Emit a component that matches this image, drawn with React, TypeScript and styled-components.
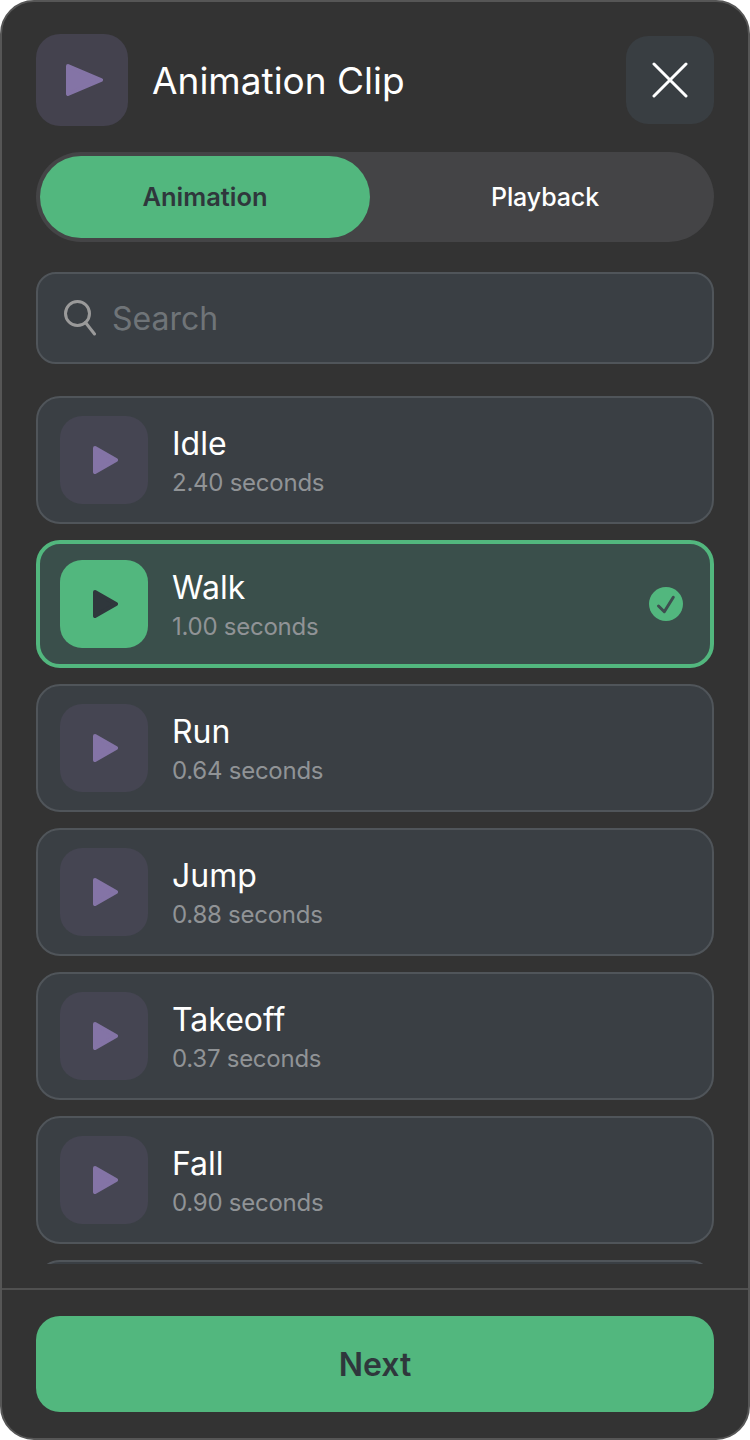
import React from "react";
import styled, { createGlobalStyle } from "styled-components";

const Global = createGlobalStyle`
  html, body { margin: 0; padding: 0; background: #ffffff; }
  * { box-sizing: border-box; }
`;

const Panel = styled.div`
  width: 750px;
  height: 1440px;
  display: flex;
  flex-direction: column;
  background: #333333;
  border: 2px solid #565656;
  border-radius: 34px;
  overflow: hidden;
  font-family: Inter, "Liberation Sans", sans-serif;
  color: #ffffff;
`;

const Header = styled.header`
  display: flex;
  align-items: center;
  padding: 32px 34px 0;
`;

const HeaderIcon = styled.div`
  width: 92px;
  height: 92px;
  border-radius: 24px;
  background: #44424e;
  display: flex;
  align-items: center;
  justify-content: center;
`;

const Title = styled.h1`
  flex: 1;
  margin: 0 0 0 24px;
  padding-top: 2px;
  font-size: 37px;
  line-height: 44px;
  font-weight: 400;
`;

const CloseButton = styled.div`
  width: 88px;
  height: 88px;
  border-radius: 22px;
  background: #393e42;
  display: flex;
  align-items: center;
  justify-content: center;
`;

const Segments = styled.div`
  display: flex;
  gap: 10px;
  height: 90px;
  margin: 26px 34px 0;
  padding: 4px;
  border-radius: 45px;
  background: #444446;
`;

const Segment = styled.div<{ $active?: boolean }>`
  flex: 1;
  display: flex;
  align-items: center;
  justify-content: center;
  padding-bottom: ${(p) => (p.$active ? "2px" : "0")};
  border-radius: 41px;
  font-size: ${(p) => (p.$active ? "25.5px" : "25px")};
  font-weight: ${(p) => (p.$active ? 600 : 500)};
  letter-spacing: ${(p) => (p.$active ? "0" : "-0.1px")};
  background: ${(p) => (p.$active ? "#52b77e" : "transparent")};
  color: ${(p) => (p.$active ? "#2f373c" : "#ffffff")};
`;

const Search = styled.div`
  display: flex;
  align-items: center;
  gap: 16px;
  height: 92px;
  margin: 30px 34px 0;
  padding: 0 26px;
  border: 2px solid #50555a;
  border-radius: 20px;
  background: #3a3f44;
`;

const Placeholder = styled.span`
  font-size: 32px;
  color: #6f7478;
`;

const List = styled.div`
  flex: 1;
  min-height: 0;
  display: flex;
  flex-direction: column;
  gap: 16px;
  margin: 32px 34px 0;
  overflow: hidden;
`;

const Row = styled.div<{ $selected?: boolean }>`
  flex: none;
  display: flex;
  align-items: center;
  height: 128px;
  padding: 0 27px 0 ${(p) => (p.$selected ? "20px" : "22px")};
  border: ${(p) => (p.$selected ? "4px solid #52b77e" : "2px solid #50555a")};
  border-radius: 24px;
  background: ${(p) => (p.$selected ? "#3a4f4b" : "#3a3f44")};
`;

const RowIcon = styled.div<{ $selected?: boolean }>`
  flex: none;
  width: 88px;
  height: 88px;
  border-radius: 22px;
  background: ${(p) => (p.$selected ? "#52b77e" : "#454552")};
  display: flex;
  align-items: center;
  justify-content: center;
`;

const RowText = styled.div`
  flex: 1;
  margin-left: 24px;
  display: flex;
  flex-direction: column;
`;

const RowName = styled.div`
  margin-top: 1px;
  font-size: 32px;
  line-height: 40px;
  font-weight: 400;
`;

const RowSub = styled.div`
  margin-top: 4px;
  font-size: 24px;
  line-height: 30px;
  letter-spacing: -0.25px;
  color: #909396;
`;

const Footer = styled.footer`
  margin-top: 24px;
  padding: 26px 34px;
  border-top: 2px solid #505050;
`;

const NextButton = styled.div`
  height: 96px;
  border-radius: 24px;
  background: #52b77e;
  color: #2f373c;
  display: flex;
  align-items: center;
  justify-content: center;
  font-size: 32px;
  font-weight: 600;
`;

const PlaySvg = styled.svg<{ $shift: number }>`
  display: block;
  margin-left: ${(p) => p.$shift}px;
`;

const Play = ({ w, h, color, shift }: { w: number; h: number; color: string; shift: number }) => (
  <PlaySvg $shift={shift} width={w} height={h} viewBox={`0 0 ${w} ${h}`}>
    <path
      d={`M2 2 L${w - 2} ${h / 2} L2 ${h - 2} Z`}
      fill={color}
      stroke={color}
      strokeWidth={4}
      strokeLinejoin="round"
    />
  </PlaySvg>
);

const items = [
  { name: "Idle", sub: "2.40 seconds" },
  { name: "Walk", sub: "1.00 seconds", selected: true },
  { name: "Run", sub: "0.64 seconds" },
  { name: "Jump", sub: "0.88 seconds" },
  { name: "Takeoff", sub: "0.37 seconds" },
  { name: "Fall", sub: "0.90 seconds" },
];

export default function App() {
  return (
    <>
      <Global />
      <Panel>
        <Header>
          <HeaderIcon>
            <Play w={37} h={32} shift={5} color="#8474a6" />
          </HeaderIcon>
          <Title>Animation Clip</Title>
          <CloseButton>
            <svg width="36" height="36" viewBox="0 0 36 36" fill="none" stroke="#ffffff" strokeWidth="3" strokeLinecap="round">
              <path d="M2 2 L34 34 M34 2 L2 34" />
            </svg>
          </CloseButton>
        </Header>
        <Segments>
          <Segment $active>Animation</Segment>
          <Segment>Playback</Segment>
        </Segments>
        <Search>
          <svg width="32" height="36" viewBox="0 0 32 36" fill="none" stroke="#9a9a9a" strokeWidth="3" strokeLinecap="round">
            <circle cx="13.5" cy="13.5" r="12" />
            <path d="M21.5 22.5 L30.5 34" />
          </svg>
          <Placeholder>Search</Placeholder>
        </Search>
        <List>
          {items.map((it) => (
            <Row key={it.name} $selected={it.selected}>
              <RowIcon $selected={it.selected}>
                <Play w={25} h={28} shift={3} color={it.selected ? "#2f373c" : "#8474a6"} />
              </RowIcon>
              <RowText>
                <RowName>{it.name}</RowName>
                <RowSub>{it.sub}</RowSub>
              </RowText>
              {it.selected && (
                <svg width="34" height="34" viewBox="0 0 34 34" fill="none">
                  <circle cx="17" cy="17" r="17" fill="#52b77e" />
                  <path d="M9.5 19 L15.3 24.7 L24.3 10.3" stroke="#3e4f50" strokeWidth="3" strokeLinecap="round" strokeLinejoin="round" />
                </svg>
              )}
            </Row>
          ))}
          <Row />
        </List>
        <Footer>
          <NextButton>Next</NextButton>
        </Footer>
      </Panel>
    </>
  );
}
